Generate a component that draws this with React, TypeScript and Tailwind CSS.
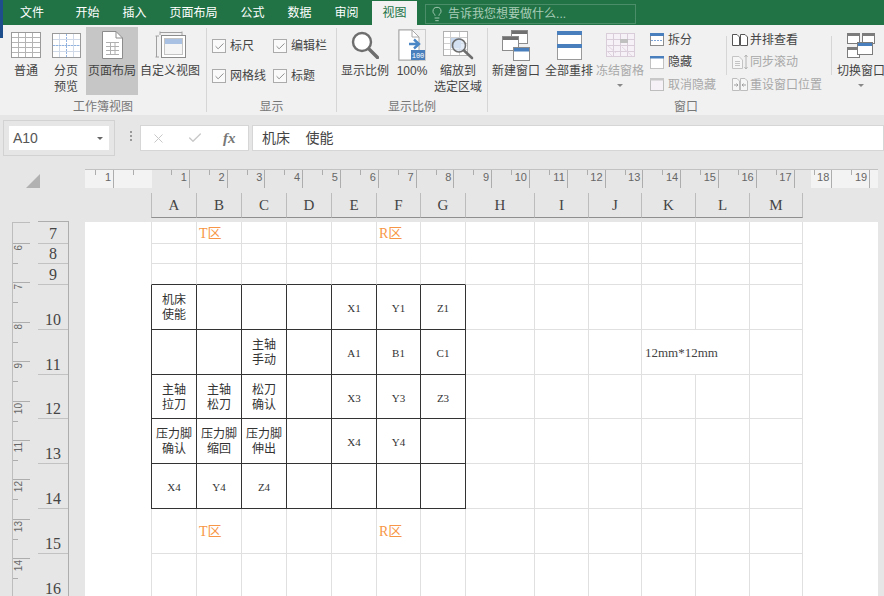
import type { ReactNode } from "react";
import { Check, Lightbulb, X } from "lucide-react";

const tabs = ["开始", "插入", "页面布局", "公式", "数据", "审阅"];

const columns = ["A", "B", "C", "D", "E", "F", "G", "H", "I", "J", "K", "L", "M"];
const colTemplate =
  "grid-cols-[46px_45px_45px_45px_45px_44px_45px_69px_54px_53px_54px_54px_53px]";
const rowNumbers = [7, 8, 9, 10, 11, 12, 13, 14, 15, 16];
const rowTemplate = "grid-rows-[22px_20px_21px_45px_45px_44px_45px_45px_45px_45px]";

type Cell = { text: string; kind: "cjk" | "mono" | "mark" | "note" };

const cells: Record<string, Cell> = {
  "7B": { text: "T区", kind: "mark" },
  "7F": { text: "R区", kind: "mark" },
  "10A": { text: "机床\n使能", kind: "cjk" },
  "10E": { text: "X1", kind: "mono" },
  "10F": { text: "Y1", kind: "mono" },
  "10G": { text: "Z1", kind: "mono" },
  "11C": { text: "主轴\n手动", kind: "cjk" },
  "11E": { text: "A1", kind: "mono" },
  "11F": { text: "B1", kind: "mono" },
  "11G": { text: "C1", kind: "mono" },
  "11K": { text: "12mm*12mm", kind: "note" },
  "12A": { text: "主轴\n拉刀", kind: "cjk" },
  "12B": { text: "主轴\n松刀", kind: "cjk" },
  "12C": { text: "松刀\n确认", kind: "cjk" },
  "12E": { text: "X3", kind: "mono" },
  "12F": { text: "Y3", kind: "mono" },
  "12G": { text: "Z3", kind: "mono" },
  "13A": { text: "压力脚\n确认", kind: "cjk" },
  "13B": { text: "压力脚\n缩回", kind: "cjk" },
  "13C": { text: "压力脚\n伸出", kind: "cjk" },
  "13E": { text: "X4", kind: "mono" },
  "13F": { text: "Y4", kind: "mono" },
  "14A": { text: "X4", kind: "mono" },
  "14B": { text: "Y4", kind: "mono" },
  "14C": { text: "Z4", kind: "mono" },
  "15B": { text: "T区", kind: "mark" },
  "15F": { text: "R区", kind: "mark" },
};

const kindClass = {
  cjk: "pt-[2px] text-[12px] leading-[15px] text-[#333] whitespace-pre-line text-center",
  mono: "pt-[3px] font-['Liberation_Serif','Noto_Sans_CJK_SC',serif] text-[11px] text-[#333]",
  mark: "pt-[1px] pl-[2px] !justify-start font-['Liberation_Serif','Noto_Sans_CJK_SC',serif] text-[14px] text-[#f79646]",
  note: "pt-[1px] pl-[3px] !justify-start font-['Liberation_Serif',serif] text-[13px] text-[#444]",
};

function GridIcon() {
  return (
    <svg width="30" height="26" viewBox="0 0 30 26" fill="none" stroke="#b4b4b4">
      <rect x="0.5" y="0.5" width="29" height="25" fill="#fff" stroke="#9a9a9a" />
      {[5, 10, 15, 20].map((y) => (
        <path key={y} d={`M1 ${y + 0.5}H29`} />
      ))}
      {[7, 14, 21].map((x) => (
        <path key={x} d={`M${x + 0.5} 1V25`} />
      ))}
    </svg>
  );
}

function PageBreakIcon() {
  return (
    <svg width="29" height="25" viewBox="0 0 29 25" fill="none" stroke="#cfd9e8">
      <rect x="0.5" y="0.5" width="28" height="24" fill="#fff" stroke="#9a9a9a" />
      {[6, 12, 18].map((y) => (
        <path key={y} d={`M1 ${y + 0.5}H28`} />
      ))}
      {[7, 21].map((x) => (
        <path key={x} d={`M${x + 0.5} 1V24`} />
      ))}
      <path d="M14.5 1V24M1 12.5H28" stroke="#8fb2e0" strokeDasharray="2 1" />
    </svg>
  );
}

function PageLayoutIcon() {
  return (
    <svg width="21" height="28" viewBox="0 0 21 28" fill="none" stroke="#8c8c8c">
      <path d="M0.5 0.5H14L20.5 7V27.5H0.5Z" fill="#fff" />
      <path d="M14 0.5V7H20.5" />
      <path d="M4 11.5H17M4 15.5H17M4 19.5H17M4 23.5H17M8.5 11V24M13 11V24" stroke="#b0b0b0" />
    </svg>
  );
}

function CustomViewIcon() {
  return (
    <svg width="31" height="28" viewBox="0 0 31 28" fill="none" stroke="#8c8c8c">
      <path d="M5 0.5V4M27 0.5V4M5 1.5H27M0.5 5H4M0.5 26H4M1.5 5V26" stroke="#a0a0a0" />
      <rect x="6.5" y="4.5" width="24" height="22" fill="#fff" />
      <rect x="9.5" y="7.5" width="18" height="16" fill="#f5f5f5" stroke="#c4c4c4" />
      <rect x="10" y="8" width="17" height="5" fill="#a9c1e2" stroke="none" />
    </svg>
  );
}

function MagnifierIcon() {
  return (
    <svg width="28" height="28" viewBox="0 0 28 28" fill="none" stroke="#6e6e6e">
      <circle cx="11" cy="11" r="9" strokeWidth="2.4" fill="#fff" />
      <path d="M18 18L26.5 26.5" strokeWidth="3.4" strokeLinecap="round" />
    </svg>
  );
}

function HundredIcon() {
  return (
    <svg width="28" height="32" viewBox="0 0 28 32" fill="none">
      <path d="M0.5 0.5H27.5V31.5H0.5Z" stroke="#a8a8a8" strokeDasharray="1 1" />
      <path d="M1 1H14L21 8V31H1Z" fill="#fff" stroke="#a8a8a8" />
      <path d="M14 1V8H21" stroke="#a8a8a8" />
      <path d="M11 15H20M16 10.5L21 15L16 19.5" stroke="#4a86c5" strokeWidth="2.4" />
      <rect x="13" y="21" width="14" height="10" fill="#4a7fbd" />
      <text x="20" y="29" textAnchor="middle" fontSize="7" fill="#fff" fontFamily="Liberation Mono, monospace">100</text>
    </svg>
  );
}

function ZoomSelectionIcon() {
  return (
    <svg width="31" height="29" viewBox="0 0 31 29" fill="none">
      <rect x="0.5" y="0.5" width="24" height="24" fill="#fff" stroke="#b0b0b0" />
      <path d="M1 6.5H24M1 12.5H24M1 18.5H24M7.5 1V24M16.5 1V24" stroke="#cfcfcf" />
      <rect x="8" y="7" width="10" height="10" fill="#c5d7ee" />
      <circle cx="16" cy="14.5" r="6.5" fill="#d7e4f4" fillOpacity="0.7" stroke="#6e6e6e" strokeWidth="1.6" />
      <path d="M21 19.5L29 27" stroke="#6e6e6e" strokeWidth="2.6" strokeLinecap="round" />
    </svg>
  );
}

function NewWindowIcon() {
  return (
    <svg width="28" height="31" viewBox="0 0 28 31" fill="none" stroke="#8c8c8c">
      <rect x="9.5" y="0.5" width="16" height="13" fill="#fff" />
      <rect x="10" y="1" width="15" height="3" fill="#707070" stroke="none" />
      <rect x="0.5" y="6.5" width="16" height="14" fill="#fff" />
      <rect x="1" y="7" width="15" height="3" fill="#707070" stroke="none" />
      <rect x="11.5" y="17.5" width="16" height="13" fill="#fff" />
      <rect x="12" y="18" width="15" height="3.5" fill="#4a7fbd" stroke="none" />
    </svg>
  );
}

function ArrangeIcon() {
  return (
    <svg width="25" height="29" viewBox="0 0 25 29" fill="none" stroke="#9a9a9a">
      <rect x="0.5" y="0.5" width="24" height="28" fill="#fff" />
      <rect x="0" y="0" width="25" height="4" fill="#4a7fbd" stroke="none" />
      <rect x="0" y="13" width="25" height="4" fill="#4a7fbd" stroke="none" />
    </svg>
  );
}

function FreezeIcon() {
  return (
    <svg width="29" height="24" viewBox="0 0 29 24" fill="none" stroke="#d8cdd8">
      <rect x="0.5" y="0.5" width="28" height="23" fill="#f6f1f6" />
      <path d="M1 6.5H28M1 12.5H28M1 18.5H28M7.5 1V23M14.5 1V23M21.5 1V23" />
      <path d="M1 12L10 20M1 18L6 23M16 14L26 23" stroke="#e3d6e3" />
      <rect x="14" y="6" width="8" height="4" fill="#c0c0c0" stroke="none" />
    </svg>
  );
}

function SplitIcon() {
  return (
    <svg width="14" height="13" viewBox="0 0 14 13" fill="none">
      <rect x="0.5" y="0.5" width="13" height="12" fill="#fff" stroke="#8c8c8c" />
      <rect x="0" y="0" width="14" height="3" fill="#4a7fbd" />
      <path d="M1 7.5H13" stroke="#7fa5d6" strokeDasharray="2 1" />
    </svg>
  );
}

function HideIcon() {
  return (
    <svg width="14" height="13" viewBox="0 0 14 13" fill="none">
      <rect x="0.5" y="0.5" width="13" height="12" fill="#fff" stroke="#8c8c8c" strokeDasharray="1 1" />
      <rect x="0" y="0" width="14" height="2.5" fill="#4a7fbd" />
    </svg>
  );
}

function UnhideIcon() {
  return (
    <svg width="14" height="13" viewBox="0 0 14 13" fill="none">
      <rect x="0.5" y="0.5" width="13" height="12" fill="#f6f1f6" stroke="#bdbdbd" />
      <rect x="0" y="0" width="14" height="2.5" fill="#c8c8c8" />
    </svg>
  );
}

function SideBySideIcon() {
  return (
    <svg width="16" height="12" viewBox="0 0 16 12" fill="none" stroke="#555">
      <path d="M0.5 0.5H5L7.5 3V11.5H0.5Z" fill="#fff" />
      <path d="M8.5 0.5H13L15.5 3V11.5H8.5Z" fill="#fff" />
    </svg>
  );
}

function SyncIcon() {
  return (
    <svg width="16" height="16" viewBox="0 0 16 16" fill="none" stroke="#c4c4c4">
      <path d="M0.5 2.5H7L10.5 6V14.5H0.5Z" fill="#f6f6f6" />
      <path d="M3 7.5H8M3 9.5H8M3 11.5H8" />
      <path d="M14 1V15M12.5 3L14 1L15.5 3M12.5 13L14 15L15.5 13" stroke="#b4b4b4" />
    </svg>
  );
}

function ResetIcon() {
  return (
    <svg width="16" height="13" viewBox="0 0 16 13" fill="none" stroke="#bdbdbd">
      <path d="M0.5 0.5H5L7.5 3V12.5H0.5Z" fill="#f6f6f6" />
      <path d="M8.5 0.5H13L15.5 3V12.5H8.5Z" fill="#f6f6f6" />
      <path d="M2 7H6M4.5 5.5L6 7L4.5 8.5M10 7H14M11.5 5.5L10 7L11.5 8.5" stroke="#9f9f9f" />
    </svg>
  );
}

function SwitchWindowIcon() {
  return (
    <svg width="28" height="25" viewBox="0 0 28 25" fill="none" stroke="#7c7c7c">
      <rect x="0.5" y="0.5" width="12" height="10" fill="#fff" />
      <rect x="1" y="1" width="11" height="2" fill="#7c7c7c" stroke="none" />
      <rect x="15.5" y="0.5" width="12" height="10" fill="#fff" />
      <rect x="16" y="1" width="11" height="2" fill="#7c7c7c" stroke="none" />
      <rect x="0.5" y="14.5" width="12" height="10" fill="#fff" />
      <rect x="1" y="15" width="11" height="2" fill="#7c7c7c" stroke="none" />
      <rect x="10.5" y="9.5" width="15" height="12" fill="#fff" />
      <rect x="11" y="10" width="14" height="3" fill="#4a7fbd" stroke="none" />
    </svg>
  );
}

function BigButton({
  width,
  icon,
  lines,
  active,
  disabled,
  caret,
}: {
  width: string;
  icon: ReactNode;
  lines: string[];
  active?: boolean;
  disabled?: boolean;
  caret?: boolean;
}) {
  return (
    <div
      className={`flex h-[68px] shrink-0 flex-col items-center text-[12px] leading-[16px] ${width} ${
        active ? "bg-[#c6c6c6]" : ""
      } ${disabled ? "text-[#a8a8a8]" : "text-[#444]"}`}
    >
      <div className="flex h-[36px] shrink-0 items-center justify-center">{icon}</div>
      {lines.map((line) => (
        <span key={line} className="whitespace-nowrap">
          {line}
        </span>
      ))}
      {caret && <span className="mt-[5px] h-0 w-0 border-x-[3px] border-t-[3px] border-x-transparent border-t-[#888]" />}
    </div>
  );
}

function Group({ width, label, children }: { width: string; label: string; children: ReactNode }) {
  return (
    <section className={`flex h-full shrink-0 flex-col ${width}`}>
      <div className="flex h-[72px] shrink-0">{children}</div>
      <div className="pt-[3px] text-center text-[12px] leading-[14px] text-[#777]">{label}</div>
    </section>
  );
}

function Separator() {
  return <div className="my-[3px] w-px shrink-0 bg-[#d6d6d6]" />;
}

function Toggle({ label, width }: { label: string; width: string }) {
  return (
    <div className={`flex h-[30px] items-center gap-[4px] text-[12px] text-[#444] ${width}`}>
      <span className="flex h-[14px] w-[14px] items-center justify-center border border-[#ababab] bg-[#fafafa]">
        <Check size={11} strokeWidth={1.6} className="text-[#666]" />
      </span>
      {label}
    </div>
  );
}

function SmallButton({ icon, label, disabled }: { icon: ReactNode; label: string; disabled?: boolean }) {
  return (
    <div className={`flex h-[22.5px] items-center text-[12px] ${disabled ? "text-[#a8a8a8]" : "text-[#444]"}`}>
      <span className="flex w-[18px] shrink-0 items-center">{icon}</span>
      <span className="whitespace-nowrap">{label}</span>
    </div>
  );
}

function Ribbon() {
  return (
    <div className="flex h-[90px] shrink-0 bg-[#f1f1f1]">
      <Group width="w-[206px]" label="工作簿视图">
        <div className="flex pt-[2px] pl-[6px]">
          <BigButton width="w-[40px]" icon={<GridIcon />} lines={["普通"]} />
          <BigButton width="w-[40px]" icon={<PageBreakIcon />} lines={["分页", "预览"]} />
          <BigButton width="w-[52px]" icon={<PageLayoutIcon />} lines={["页面布局"]} active />
          <BigButton width="ml-[2px] w-[60px]" icon={<CustomViewIcon />} lines={["自定义视图"]} />
        </div>
      </Group>
      <Separator />
      <Group width="w-[129px]" label="显示">
        <div className="pt-[6px] pl-[5px]">
          <div className="flex">
            <Toggle label="标尺" width="w-[61px]" />
            <Toggle label="编辑栏" width="w-[60px]" />
          </div>
          <div className="flex">
            <Toggle label="网格线" width="w-[61px]" />
            <Toggle label="标题" width="w-[60px]" />
          </div>
        </div>
      </Group>
      <Separator />
      <Group width="w-[150px]" label="显示比例">
        <div className="flex pt-[2px] pl-[3px]">
          <BigButton width="w-[50px]" icon={<MagnifierIcon />} lines={["显示比例"]} />
          <BigButton width="w-[44px]" icon={<HundredIcon />} lines={["100%"]} />
          <BigButton width="w-[48px]" icon={<ZoomSelectionIcon />} lines={["缩放到", "选定区域"]} />
        </div>
      </Group>
      <Separator />
      <Group width="w-[396px]" label="窗口">
        <div className="flex pt-[2px] pl-[3px]">
          <BigButton width="w-[50px]" icon={<NewWindowIcon />} lines={["新建窗口"]} />
          <BigButton width="ml-[3px] w-[50px]" icon={<ArrangeIcon />} lines={["全部重排"]} />
          <BigButton width="ml-[2px] w-[48px]" icon={<FreezeIcon />} lines={["冻结窗格"]} disabled caret />
          <div className="ml-[6px] w-[76px] pt-[1.5px]">
            <SmallButton icon={<SplitIcon />} label="拆分" />
            <SmallButton icon={<HideIcon />} label="隐藏" />
            <SmallButton icon={<UnhideIcon />} label="取消隐藏" disabled />
          </div>
          <div className="mt-[9px] mb-[22px] w-px bg-[#d6d6d6]" />
          <div className="ml-[5px] w-[99px] pt-[1.5px]">
            <SmallButton icon={<SideBySideIcon />} label="并排查看" />
            <SmallButton icon={<SyncIcon />} label="同步滚动" disabled />
            <SmallButton icon={<ResetIcon />} label="重设窗口位置" disabled />
          </div>
          <div className="mt-[9px] mb-[22px] w-px bg-[#d6d6d6]" />
          <BigButton width="ml-[5px] w-[48px]" icon={<SwitchWindowIcon />} lines={["切换窗口"]} caret />
        </div>
      </Group>
    </div>
  );
}

function FormulaBar() {
  return (
    <div className="flex h-[54px] shrink-0 items-start pt-[5px] pl-[3px]">
      <div className="border border-[#d2d2d2] p-[5px]">
        <div className="flex h-[24px] w-[100px] items-center justify-between bg-white pr-[6px] pl-[4px] text-[14px] text-[#555]">
          A10
          <span className="h-0 w-0 border-x-[3px] border-t-[3px] border-x-transparent border-t-[#666]" />
        </div>
      </div>
      <div className="mt-[11px] ml-[7px] flex w-[18px] flex-col items-center gap-[2px]">
        <span className="h-[2px] w-[2px] bg-[#999]" />
        <span className="h-[2px] w-[2px] bg-[#999]" />
        <span className="h-[2px] w-[2px] bg-[#999]" />
      </div>
      <div className="mt-[5px] flex h-[26px] w-[109px] items-center border border-[#d6d6d6] bg-white pl-[10px] text-[#c8c8c8]">
        <X size={15} strokeWidth={1.6} />
        <Check size={16} strokeWidth={2} className="ml-[21px]" />
        <span className="ml-[20px] font-['Liberation_Serif',serif] text-[15px] font-bold text-[#777] italic">fx</span>
      </div>
      <div className="mt-[5px] ml-[3px] flex h-[26px] flex-1 items-center whitespace-pre border border-[#d6d6d6] bg-white pl-[9px] text-[14px] text-[#444]">
        机床{"    "}使能
      </div>
    </div>
  );
}

function HorizontalRuler() {
  return (
    <div className="flex h-[19px] shrink-0">
      <div className="flex w-[85px] shrink-0 items-end justify-end pr-[45px]">
        <span className="h-0 w-0 border-b-[14px] border-l-[14px] border-b-[#b1b1b1] border-l-transparent" />
      </div>
      <div className="flex h-[19px] w-[793px] overflow-hidden border-t border-[#c2c2c2] bg-[linear-gradient(90deg,#f3f3f3_67px,#e6e6e6_67px,#e6e6e6_726px,#f3f3f3_726px)] text-[11px] leading-[14px] text-[#666]">
        <div className="relative w-[29.2px] shrink-0 border-r border-[#adadad] pr-[2px] text-right">
          1
          <span className="absolute top-0 left-[10px] h-[5px] w-px bg-[#adadad]" />
        </div>
        <div className="relative w-[37.8px] shrink-0">
          <span className="absolute top-0 left-[19px] h-[5px] w-px bg-[#adadad]" />
        </div>
        {Array.from({ length: 19 }, (_, i) => i + 1).map((n) => (
          <div key={n} className="relative w-[37.8px] shrink-0 border-r border-[#adadad] pr-[2px] text-right">
            {n}
            <span className="absolute top-0 left-[19px] h-[5px] w-px bg-[#adadad]" />
          </div>
        ))}
      </div>
    </div>
  );
}

function ColumnHeaders() {
  return (
    <div className={`mt-[5px] ml-[151px] grid h-[21px] w-[652px] shrink-0 ${colTemplate}`}>
      {columns.map((c, i) => (
        <div
          key={c}
          className={`flex items-center justify-center border-r border-b border-r-[#bcbcbc] border-b-[#8f8f8f] pt-[1px] font-['Liberation_Serif',serif] text-[15px] text-[#444] ${
            i === 0 ? "border-l border-l-[#bcbcbc]" : ""
          }`}
        >
          {c}
        </div>
      ))}
    </div>
  );
}

function VerticalRuler() {
  const marks = [6, 7, 8, 9, 10, 11, 12, 13, 14];
  return (
    <div className="w-[18px] shrink-0 border-l border-[#bdbdbd] text-[10px] leading-none text-[#666]">
      <div className="h-[21px] border-t border-[#bdbdbd]" />
      {marks.map((n) => (
        <div key={n} className="relative h-[39.4px] border-t border-[#adadad] pt-[1px] pl-[1px]">
          <span className="block origin-center [writing-mode:vertical-rl] rotate-180">{n}</span>
          <span className="absolute top-[19px] left-0 h-px w-[5px] bg-[#adadad]" />
        </div>
      ))}
    </div>
  );
}

function RowHeaders() {
  return (
    <div className={`-mt-px ml-[8px] grid h-fit w-[31px] shrink-0 border-t border-r border-[#adadad] ${rowTemplate}`}>
      {rowNumbers.map((n) => (
        <div
          key={n}
          className="flex items-end justify-center border-b border-[#c2c2c2] pb-[1.5px] font-['Liberation_Serif',serif] text-[16px] leading-[16px] text-[#444]"
        >
          {n}
        </div>
      ))}
    </div>
  );
}

function Sheet() {
  return (
    <div className="flex min-h-0 flex-1 pt-[8px] pl-[12px]">
      <VerticalRuler />
      <RowHeaders />
      <div className="ml-[16px] h-full w-[793px] shrink-0 overflow-hidden bg-white pl-[66px]">
        <div className={`grid w-[652px] ${colTemplate} ${rowTemplate}`}>
          {rowNumbers.flatMap((row) =>
            columns.map((col, i) => {
              if (row === 11 && col === "L") return null;
              const cell = cells[`${row}${col}`];
              const inTable = row >= 10 && row <= 14 && i <= 6;
              const aboveTable = row === 9 && i <= 6;
              return (
                <div
                  key={`${row}${col}`}
                  className={`flex items-center justify-center border-r border-b ${
                    inTable ? "border-r-[#333]" : "border-r-[#e0e0e0]"
                  } ${inTable || aboveTable ? "border-b-[#333]" : "border-b-[#e0e0e0]"} ${
                    i === 0 ? (inTable ? "border-l border-l-[#333]" : "border-l border-l-[#e0e0e0]") : ""
                  } ${row === 11 && col === "K" ? "col-span-2" : ""} ${cell ? kindClass[cell.kind] : ""}`}
                >
                  {cell?.text}
                </div>
              );
            }),
          )}
        </div>
      </div>
    </div>
  );
}

export default function App() {
  return (
    <div className="relative flex h-[596px] w-[884px] flex-col overflow-hidden bg-[#e6e6e6] font-['Liberation_Sans','Noto_Sans_CJK_SC',sans-serif]">
      {/* other window peeking in behind Excel */}
      <div className="absolute top-0 left-0 z-10 h-[38px] w-[3px] bg-[#1f4e8c]" />

      <div className="flex h-[25px] shrink-0 items-end bg-[#217346] text-[12px] text-white">
        <div className="mx-[8px] flex h-[24px] items-center px-[12px]">文件</div>
        {tabs.map((tab) => (
          <div key={tab} className="flex h-[24px] items-center px-[11.5px]">
            {tab}
          </div>
        ))}
        <div className="ml-[2px] flex h-[24px] w-[45px] items-center justify-center bg-[#f1f1f1] text-[#217346]">
          视图
        </div>
        <div className="mb-[1px] ml-[8px] flex h-[20px] w-[211px] items-center gap-[3px] border border-[#4a8d68] pl-[3px] text-[#a9cdb7]">
          <Lightbulb size={16} strokeWidth={1.4} />
          告诉我您想要做什么...
        </div>
      </div>

      <Ribbon />
      <FormulaBar />
      <HorizontalRuler />
      <ColumnHeaders />
      <Sheet />
    </div>
  );
}
